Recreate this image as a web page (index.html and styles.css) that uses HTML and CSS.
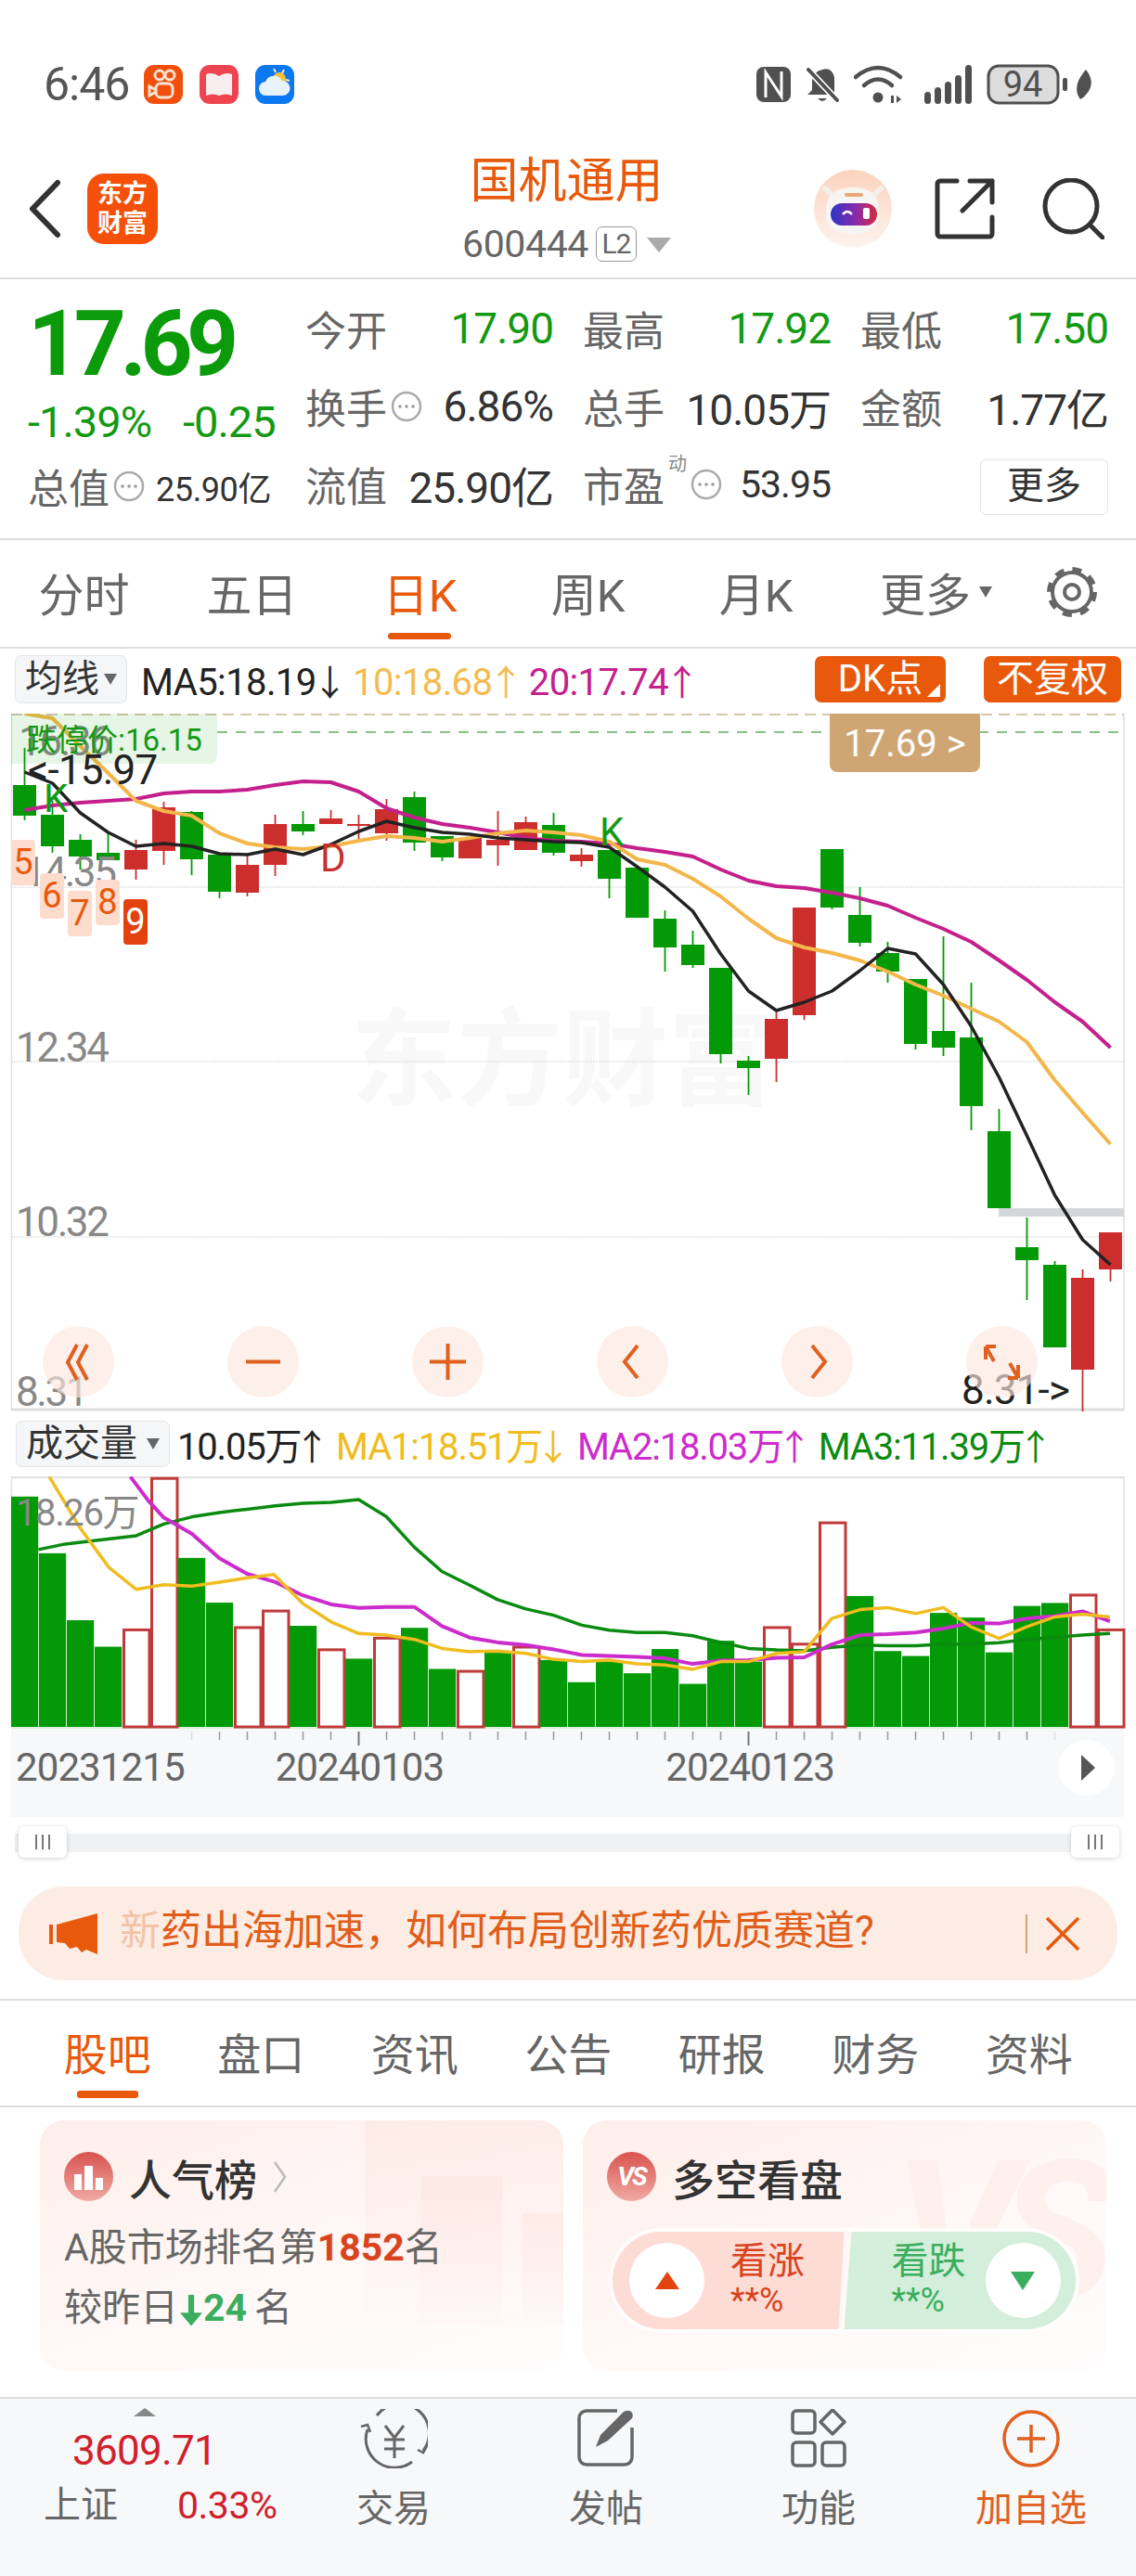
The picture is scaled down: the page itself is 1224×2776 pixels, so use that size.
FILE: index.html
```html
<!DOCTYPE html>
<html lang="zh-CN">
<head>
  <meta charset="UTF-8">
  <meta name="viewport" content="width=device-width, initial-scale=1.0">
  <title>国机通用 600444</title>
  <link rel="stylesheet" href="styles.css">
</head>
<body>

  <!-- Shared small "..." hint icon -->
  <svg class="sprite" width="0" height="0">
    <symbol id="hint" viewBox="0 0 34 34">
      <circle cx="17" cy="17" r="15" fill="none" stroke="#aaa" stroke-width="2.5"/>
      <circle cx="10" cy="17" r="1.8" fill="#999"/>
      <circle cx="17" cy="17" r="1.8" fill="#999"/>
      <circle cx="24" cy="17" r="1.8" fill="#999"/>
    </symbol>
  </svg>

  <!-- Status bar -->
  <div class="status">
    <span class="time">6:46</span>
    <svg class="app" viewBox="0 0 42 42">
      <rect width="42" height="42" rx="11" fill="#f0500c"/>
      <g fill="none" stroke="#fde3d3" stroke-width="3">
        <circle cx="17" cy="11" r="5"/>
        <circle cx="28" cy="11" r="5"/>
        <rect x="13" y="20" width="18" height="15" rx="5"/>
        <path d="M13 27 L6 23 V33 L13 29"/>
      </g>
    </svg>
    <svg class="app" viewBox="0 0 42 42">
      <rect width="42" height="42" rx="11" fill="#ee4450"/>
      <path d="M7 10 Q14 7 21 12 Q28 7 35 10 V33 Q28 30 21 33 Q14 30 7 33 Z" fill="#f6eeee"/>
    </svg>
    <svg class="app" viewBox="0 0 42 42">
      <rect width="42" height="42" rx="11" fill="#0a78f0"/>
      <circle cx="26" cy="15" r="7" fill="#f5c038"/>
      <path d="M20 4 L22 8 M31 5 L29 9 M37 17 L33 16" stroke="#fde9b0" stroke-width="2"/>
      <path d="M12 33 a7.5 7.5 0 0 1 -1 -15 a10 10 0 0 1 18 -1 a8 8 0 0 1 1 16 Z" fill="#e8f2fb"/>
    </svg>
    <div class="status-right">
      <svg width="37" height="38" viewBox="0 0 37 38">
        <rect width="37" height="38" rx="8" fill="#505050"/>
        <path d="M10 33 V6 L27 32 V5" fill="none" stroke="#fff" stroke-width="3"/>
      </svg>
      <svg width="36" height="40" viewBox="0 0 36 40">
        <path d="M2 31 L7 26 V16 Q8 6 18 4 Q28 1 31 12 V31 Z" fill="#505050"/>
        <path d="M13 35 H23 Q18 41 13 35 Z" fill="#505050"/>
        <path d="M3 4 L34 37" stroke="#fff" stroke-width="7"/>
        <path d="M3 4 L34 37" stroke="#505050" stroke-width="4" stroke-linecap="round"/>
      </svg>
      <svg class="wifi" width="53" height="42" viewBox="0 0 53 42">
        <g fill="none" stroke="#505050" stroke-width="4.5" stroke-linecap="round">
          <path d="M2 13 Q26 -7 50 13"/>
          <path d="M11 22 Q26 9 41 22"/>
        </g>
        <circle cx="26" cy="35" r="5.5" fill="#505050"/>
        <path d="M40 33 V41 H43 V33 Z M46 33 V41 L51 37 Z" fill="#505050"/>
      </svg>
      <svg width="51" height="42" viewBox="0 0 51 42">
        <g fill="#505050">
          <rect x="0" y="29" width="7" height="13" rx="3.5"/>
          <rect x="11" y="24" width="7" height="18" rx="3.5"/>
          <rect x="22" y="18" width="7" height="24" rx="3.5"/>
          <rect x="33" y="11" width="7" height="31" rx="3.5"/>
          <rect x="44" y="0" width="7" height="42" rx="3.5"/>
        </g>
      </svg>
      <svg class="batt" width="116" height="44" viewBox="0 0 116 44">
        <rect x="2" y="2" width="75" height="40" rx="11" fill="#dcdcdc" stroke="#505050" stroke-width="3"/>
        <text x="39" y="35" text-anchor="middle" class="batt-num">94</text>
        <rect x="82" y="15" width="5" height="14" rx="2" fill="#505050"/>
        <path d="M107 6 Q118 20 108 32 Q105 36 101 38 Q91 24 107 6 Z" fill="#505050"/>
      </svg>
    </div>
  </div>

  <!-- Top bar -->
  <div class="topbar">
    <div class="top-left">
      <svg width="35" height="64" viewBox="0 0 35 64">
        <path d="M31 4 L4 32 L31 60" fill="none" stroke="#333" stroke-width="6" stroke-linecap="round" stroke-linejoin="round"/>
      </svg>
      <div class="logo">东方<br>财富</div>
    </div>
    <div class="top-mid">
      <div class="stock-name">国机通用</div>
      <div class="stock-code">
        <span>600444</span>
        <span class="l2">L2</span>
        <span class="caret"></span>
      </div>
    </div>
    <div class="top-right">
      <svg width="84" height="84" viewBox="0 0 84 84">
        <defs>
          <linearGradient id="ava" x1="0" y1="0" x2="0" y2="1">
            <stop offset="0" stop-color="#fbd3bd"/>
            <stop offset="1" stop-color="#fdf3ee"/>
          </linearGradient>
          <linearGradient id="visor" x1="0" y1="0" x2="1" y2="0">
            <stop offset="0" stop-color="#2c34c8"/>
            <stop offset="0.55" stop-color="#8a2aa8"/>
            <stop offset="1" stop-color="#d82a3c"/>
          </linearGradient>
        </defs>
        <circle cx="42" cy="42" r="42" fill="url(#ava)"/>
        <path d="M12 20 L21 29 M72 20 L63 29" stroke="#f4eeea" stroke-width="6" stroke-linecap="round"/>
        <path d="M13 44 Q13 19 42 19 Q70 19 70 44 V52 Q66 68 42 69 Q16 68 13 52 Z" fill="#f7f5f4"/>
        <rect x="33" y="25" width="20" height="4" rx="2" fill="#e8a877"/>
        <rect x="18" y="36" width="50" height="24" rx="12" fill="url(#visor)"/>
        <path d="M31 48 Q36 42 41 48" fill="none" stroke="#fff" stroke-width="2.5"/>
        <rect x="53" y="41" width="7" height="12" rx="2" fill="#fff"/>
      </svg>
      <svg class="t-share" width="65" height="66" viewBox="0 0 65 66">
        <path d="M24 3 H6 a3 3 0 0 0 -3 3 V60 a3 3 0 0 0 3 3 H59 a3 3 0 0 0 3 -3 V42 M38 3 H62 V26 M62 3 L30 35" fill="none" stroke="#333" stroke-width="5" stroke-linecap="round" stroke-linejoin="round"/>
      </svg>
      <svg class="t-search" width="67" height="66" viewBox="0 0 67 66">
        <circle cx="31" cy="30" r="28" fill="none" stroke="#333" stroke-width="5"/>
        <path d="M52 51 L65 64" stroke="#333" stroke-width="5" stroke-linecap="round"/>
      </svg>
    </div>
  </div>

  <!-- Quote summary -->
  <div class="quote">
    <div class="quote-left">
      <div class="price">17.69</div>
      <div class="change"><span>-1.39%</span><span>-0.25</span></div>
      <div class="cap">
        <span class="lab">总值</span>
        <svg class="hint"><use href="#hint"/></svg>
        <span class="cap-val">25.90亿</span>
      </div>
    </div>
    <div class="quote-grid">
      <div class="cell"><span class="lab">今开</span><span class="num down">17.90</span></div>
      <div class="cell"><span class="lab">最高</span><span class="num down">17.92</span></div>
      <div class="cell"><span class="lab">最低</span><span class="num down">17.50</span></div>
      <div class="cell">
        <span class="lab-wrap"><span class="lab">换手</span><svg class="hint"><use href="#hint"/></svg></span>
        <span class="num">6.86%</span>
      </div>
      <div class="cell"><span class="lab">总手</span><span class="num">10.05万</span></div>
      <div class="cell"><span class="lab">金额</span><span class="num">1.77亿</span></div>
      <div class="cell"><span class="lab">流值</span><span class="num">25.90亿</span></div>
      <div class="cell">
        <span class="lab-wrap">
          <span class="lab">市盈</span><sup class="dyn">动</sup><svg class="hint"><use href="#hint"/></svg>
        </span>
        <span class="num pe">53.95</span>
      </div>
      <div class="cell cell-end"><a class="more-btn">更多</a></div>
    </div>
  </div>

  <!-- Period tabs -->
  <div class="periods">
    <a class="period">分时</a>
    <a class="period">五日</a>
    <a class="period on">日K</a>
    <a class="period">周K</a>
    <a class="period">月K</a>
    <a class="period period-more">更多<i class="mini-caret"></i></a>
    <a class="period">
      <svg width="56" height="58" viewBox="0 0 56 58">
        <g fill="none" stroke="#666">
          <circle cx="28" cy="29" r="21" stroke-width="4"/>
          <circle cx="28" cy="29" r="24" stroke-width="6" stroke-dasharray="9.8 9"/>
          <circle cx="28" cy="29" r="8" stroke-width="4"/>
        </g>
      </svg>
    </a>
  </div>

  <!-- MA legend -->
  <div class="ma-row">
    <div class="select">均线<i class="mini-caret"></i></div>
    <span class="ma">MA5:18.19<b>↓</b></span>
    <span class="ma ma-10">10:18.68<b>↑</b></span>
    <span class="ma ma-20">20:17.74<b>↑</b></span>
    <div class="ma-btns">
      <a class="tag-btn dk">DK点</a>
      <a class="tag-btn">不复权</a>
    </div>
  </div>

  <!-- Candlestick chart -->
  <div class="kchart">
    <div class="watermark">东方财富</div>
    <svg id="k-svg" class="plot" width="1224" height="752" viewBox="0 768 1224 752"></svg>
    <span class="axis a-top">16.36</span>
    <span class="axis a-1">14.35</span>
    <span class="axis a-2">12.34</span>
    <span class="axis a-3">10.32</span>
    <span class="axis a-4">8.31</span>
    <div class="limit">跌停价:16.15</div>
    <span class="note hi">&lt;-15.97</span>
    <span class="note lo">8.31-&gt;</span>
    <span class="mark k1">K</span>
    <span class="mark k2">K</span>
    <span class="mark d1">D</span>
    <span class="seq s5">5</span>
    <span class="seq s6">6</span>
    <span class="seq s7">7</span>
    <span class="seq s8">8</span>
    <span class="seq s9">9</span>
    <div class="last-tag">17.69 &gt;</div>

    <div class="tools">
      <a class="tool"><svg viewBox="0 0 77 77"><path d="M37 20 L27 39 L37 58 M48 20 L38 39 L48 58" /></svg></a>
      <a class="tool"><svg viewBox="0 0 77 77"><path d="M20 38.5 H57"/></svg></a>
      <a class="tool"><svg viewBox="0 0 77 77"><path d="M19 38.5 H58 M38.5 19 V58"/></svg></a>
      <a class="tool"><svg viewBox="0 0 77 77"><path d="M44 21 L30 38.5 L44 56"/></svg></a>
      <a class="tool"><svg viewBox="0 0 77 77"><path d="M33 21 L47 38.5 L33 56"/></svg></a>
      <a class="tool"><svg viewBox="0 0 77 77"><path d="M21 22 H32 M21 22 V36 M21 22 L30 38 M56 56 H45 M56 56 V42 M56 56 L47 40"/></svg></a>
    </div>
  </div>

  <!-- Volume legend -->
  <div class="vol-row">
    <div class="select select-vol">成交量<i class="mini-caret"></i></div>
    <span class="ma">10.05万<b>↑</b></span>
    <span class="ma vol-1">MA1:18.51万<b>↓</b></span>
    <span class="ma vol-2">MA2:18.03万<b>↑</b></span>
    <span class="ma vol-3">MA3:11.39万<b>↑</b></span>
  </div>

  <!-- Volume chart -->
  <div class="vchart">
    <svg id="v-svg" class="plot" width="1224" height="272" viewBox="0 1590 1224 272"></svg>
    <span class="axis a-vol">18.26万</span>
  </div>

  <!-- Date axis -->
  <div class="date-axis">
    <svg id="ticks" class="ticks" width="1224" height="18"></svg>
    <div class="dates">
      <span>20231215</span>
      <span>20240103</span>
      <span>20240123</span>
    </div>
    <a class="next"><i></i></a>
  </div>

  <!-- Range slider -->
  <div class="slider">
    <div class="track">
      <span class="grip grip-l"><i></i><i></i><i></i></span>
      <span class="grip grip-r"><i></i><i></i><i></i></span>
    </div>
  </div>

  <!-- Notice banner -->
  <div class="banner">
    <svg width="52" height="44" viewBox="0 0 52 44">
      <path d="M0 12 H4 V33 H0 Z M8 12 L52 0 V44 L40 39 L35 42 L30 36 L22 38 L17 32 L8 31 Z" fill="#e8590c"/>
    </svg>
    <span class="banner-text"><span class="fade">新</span>药出海加速，如何布局创新药优质赛道?</span>
    <i class="banner-sep"></i>
    <svg width="38" height="38" viewBox="0 0 38 38">
      <path d="M2 2 L36 36 M36 2 L2 36" stroke="#e8590c" stroke-width="3.5"/>
    </svg>
  </div>

  <!-- Content tabs -->
  <div class="subtabs">
    <a class="subtab on">股吧</a>
    <a class="subtab">盘口</a>
    <a class="subtab">资讯</a>
    <a class="subtab">公告</a>
    <a class="subtab">研报</a>
    <a class="subtab">财务</a>
    <a class="subtab">资料</a>
  </div>

  <!-- Cards -->
  <div class="cards">
    <div class="card">
      <svg class="card-bg" width="564" height="270" viewBox="0 0 564 270">
        <defs>
          <linearGradient id="podium" x1="0" y1="0" x2="0" y2="1">
            <stop offset="0" stop-color="#fbdcd6" stop-opacity="0.35"/>
            <stop offset="1" stop-color="#fbdcd6" stop-opacity="0.05"/>
          </linearGradient>
        </defs>
        <g fill="url(#podium)">
          <rect x="350" y="0" width="214" height="220"/>
          <rect x="410" y="60" width="88" height="160"/>
          <rect x="520" y="100" width="44" height="120"/>
        </g>
      </svg>
      <div class="card-head">
        <svg class="round-ic" viewBox="0 0 53 53">
          <rect x="11" y="24" width="8" height="17" fill="#fff"/>
          <rect x="22" y="15" width="9" height="26" fill="#fff"/>
          <rect x="34" y="28" width="8" height="13" fill="#fff"/>
        </svg>
        <span class="card-title">人气榜</span>
        <svg width="16" height="38" viewBox="0 0 16 38">
          <path d="M2 3 L13 19 L2 35" fill="none" stroke="#bbb" stroke-width="2.5"/>
        </svg>
      </div>
      <div class="card-line">A股市场排名第<b class="hot">1852</b>名</div>
      <div class="card-line">较昨日<b class="cool arrow-down"></b><b class="cool rank-num">24</b>名</div>
    </div>
    <div class="card">
      <span class="card-vs">VS</span>
      <div class="card-head">
        <span class="round-ic round-vs">VS</span>
        <span class="card-title">多空看盘</span>
      </div>
      <div class="pill">
        <div class="side bull">
          <span class="dot"><i class="tri-up"></i></span>
          <div class="side-text"><span>看涨</span><small>**%</small></div>
        </div>
        <div class="side bear">
          <div class="side-text"><span>看跌</span><small>**%</small></div>
          <span class="dot"><i class="tri-down"></i></span>
        </div>
      </div>
    </div>
  </div>

  <!-- Bottom navigation -->
  <div class="bottom-nav">
    <div class="index">
      <i class="index-caret"></i>
      <div class="index-val">3609.71</div>
      <div class="index-row"><span>上证</span><span class="index-pct">0.33%</span></div>
    </div>
    <a class="nav-item">
      <svg width="73" height="64" viewBox="0 0 73 64">
        <g fill="none" stroke="#666" stroke-width="3">
          <path d="M18 7 A31 31 0 0 1 68 45"/>
          <path d="M56 57 A31 31 0 0 1 8 22"/>
          <path d="M62 44 L68 47 L72 40 M1 19 L8 17 L11 25" stroke-width="2.5"/>
          <path d="M27 18 L37 31 L47 18 M26 33 H48 M26 43 H48 M37 31 V53"/>
        </g>
      </svg>
      <span>交易</span>
    </a>
    <a class="nav-item">
      <svg width="62" height="64" viewBox="0 0 62 64">
        <path d="M43 2 H10 a8 8 0 0 0 -8 8 V52 a8 8 0 0 0 8 8 H51 a8 8 0 0 0 8 -8 V20" fill="none" stroke="#666" stroke-width="3.5"/>
        <path d="M20 41 L25 28 L50 3 Q56 0 59 4 Q61 8 58 11 L33 34 Z" fill="#666"/>
      </svg>
      <span>发帖</span>
    </a>
    <a class="nav-item">
      <svg width="60" height="64" viewBox="0 0 60 64">
        <g fill="none" stroke="#666" stroke-width="3.5">
          <rect x="2" y="2" width="24" height="24" rx="4"/>
          <path d="M45 1 L58 14 L45 27 L32 14 Z" stroke-linejoin="round"/>
          <rect x="2" y="36" width="24" height="25" rx="4"/>
          <rect x="34" y="36" width="24" height="25" rx="4"/>
        </g>
      </svg>
      <span>功能</span>
    </a>
    <a class="nav-item nav-add">
      <svg width="64" height="64" viewBox="0 0 64 64">
        <circle cx="32" cy="32" r="29" fill="none" stroke="#e0601f" stroke-width="3.5"/>
        <path d="M17 32 H47 M32 17 V47" stroke="#e0601f" stroke-width="3.5"/>
      </svg>
      <span>加自选</span>
    </a>
  </div>

  <script src="chart.js"></script>
</body>
</html>
```

FILE: styles.css
```css
* {
  margin: 0;
  padding: 0;
  box-sizing: border-box;
}

body {
  width: 1224px;
  height: 2776px;
  overflow: hidden;
  background: #fff;
  font-family: Roboto, "Noto Sans CJK SC", sans-serif;
  color: #333;
}

i {
  font-style: normal;
}

.sprite {
  position: absolute;
}

/* Status bar */
.status {
  height: 130px;
  padding: 52px 45px 0 47px;
  display: flex;
  align-items: center;
}

.time {
  font-size: 50px;
  letter-spacing: -1px;
  color: #555;
  width: 108px;
}

.app {
  width: 42px;
  height: 42px;
  margin-right: 18px;
}

.status-right {
  margin-left: auto;
  display: flex;
  align-items: center;
  gap: 16px;
}

.wifi {
  margin-right: 7px;
}

.batt-num {
  font-size: 38px;
  fill: #505050;
  font-family: Roboto, sans-serif;
}

/* Top bar */
.topbar {
  height: 171px;
  border-bottom: 2px solid #ddd;
  display: grid;
  grid-template-columns: 1fr auto 1fr;
  align-items: center;
  padding: 20px 34px 0 31px;
}

.top-left {
  display: flex;
  align-items: center;
  gap: 28px;
}

.logo {
  width: 76px;
  height: 76px;
  border-radius: 18px;
  background: #f4500a;
  color: #fff;
  font-size: 27px;
  font-weight: 700;
  line-height: 32px;
  text-align: center;
  padding-top: 6px;
}

.top-mid {
  display: flex;
  flex-direction: column;
  align-items: center;
  gap: 14px;
}

.stock-name {
  font-size: 52px;
  line-height: 62px;
  color: #e8590c;
}

.stock-code {
  display: flex;
  align-items: center;
  height: 44px;
  font-size: 41px;
  letter-spacing: -0.4px;
  color: #666;
}

.l2 {
  border: 1.5px solid #999;
  border-radius: 7px;
  font-size: 30px;
  line-height: 36px;
  width: 44px;
  text-align: center;
  margin: 0 11px 0 8px;
  letter-spacing: -1px;
}

.caret {
  border-left: 13px solid transparent;
  border-right: 13px solid transparent;
  border-top: 16px solid #aaa;
  margin-top: 2px;
}

.top-right {
  display: flex;
  justify-content: flex-end;
  align-items: center;
}

.t-share {
  margin-left: 46px;
}

.t-search {
  margin-left: 51px;
}

/* Quote */
.quote {
  height: 281px;
  border-bottom: 2px solid #ddd;
  display: flex;
  padding-left: 30px;
}

.quote-left {
  width: 299px;
  padding-top: 20px;
}

.price {
  font-size: 98px;
  line-height: 100px;
  font-weight: 700;
  letter-spacing: -6.5px;
  color: #0a9a0a;
}

.change {
  height: 50px;
  margin-top: 9px;
  display: flex;
  gap: 34px;
  font-size: 47px;
  line-height: 50px;
  letter-spacing: -1px;
  color: #129a12;
  white-space: nowrap;
}

.cap {
  height: 84px;
  margin-top: 2px;
  display: flex;
  align-items: center;
}

.lab {
  font-size: 44px;
  color: #666;
}

.hint {
  width: 34px;
  height: 34px;
  margin-left: 4px;
}

.cap-val {
  font-size: 36px;
  letter-spacing: -0.4px;
  margin-left: 12px;
}

.quote-grid {
  padding-top: 11px;
  display: grid;
  grid-template-columns: repeat(3, 267px);
  grid-auto-rows: 84px;
  column-gap: 32px;
}

.cell {
  display: flex;
  align-items: center;
  justify-content: space-between;
}

.cell-end {
  justify-content: flex-end;
}

.lab-wrap {
  display: flex;
  align-items: center;
  position: relative;
}

.dyn {
  font-size: 20px;
  color: #888;
  line-height: 20px;
  margin: -44px 0 0 4px;
}

.num {
  font-size: 46px;
  letter-spacing: -1px;
}

.num.down {
  color: #129a12;
}

.num.pe {
  font-size: 41px;
}

.more-btn {
  width: 138px;
  height: 60px;
  border: 1.5px solid #e5e5e5;
  border-radius: 6px;
  font-size: 40px;
  line-height: 56px;
  text-align: center;
  color: #333;
  margin: 6px 0 0;
}

/* Period tabs */
.periods {
  height: 117px;
  border-bottom: 2px solid #ddd;
  display: grid;
  grid-template-columns: repeat(6, 181px) 138px;
  align-items: center;
}

.period {
  height: 100%;
  font-size: 49px;
  color: #666;
  display: flex;
  align-items: center;
  justify-content: center;
  padding-bottom: 4px;
  position: relative;
}

.period-more {
  padding-left: 26px;
}

.period.on {
  color: #e8590c;
}

.period.on::after {
  content: "";
  position: absolute;
  left: 50%;
  top: 100px;
  width: 68px;
  height: 7px;
  margin-left: -35px;
  border-radius: 4px;
  background: #e8590c;
}

.mini-caret {
  display: inline-block;
  margin-left: 9px;
  border-left: 7px solid transparent;
  border-right: 7px solid transparent;
  border-top: 12px solid #666;
}

/* Legend rows */
.ma-row {
  height: 70px;
  padding: 0 16px 4px;
  display: flex;
  align-items: center;
}

.select {
  width: 121px;
  height: 52px;
  margin-right: 15px;
  background: #f5f6f8;
  border: 1.5px solid #e4e5e8;
  border-radius: 7px;
  font-size: 40px;
  line-height: 48px;
  padding-left: 10px;
  display: flex;
  align-items: center;
  color: #333;
}

.select .mini-caret {
  margin-left: 5px;
}

.ma {
  font-size: 40px;
  letter-spacing: -0.6px;
  color: #222;
  margin-right: 10px;
  white-space: nowrap;
}

/* Tall thin arrows after each value */
.ma b {
  font-weight: 400;
  font-family: "Noto Sans CJK SC", sans-serif;
  font-size: 38px;
  margin: 0 -4px;
}

.ma-10 {
  color: #f3bb50;
}

.ma-20 {
  color: #c4208c;
}

.ma-btns {
  margin-left: auto;
  display: flex;
  gap: 41px;
}

.tag-btn {
  height: 50px;
  width: 148px;
  background: #e8590c;
  border-radius: 7px;
  color: #fff;
  font-size: 40px;
  line-height: 50px;
  text-align: center;
  position: relative;
}

.dk {
  width: 141px;
}

.dk::after {
  content: "";
  position: absolute;
  right: 6px;
  bottom: 6px;
  border-left: 14px solid transparent;
  border-bottom: 14px solid #fff;
}

/* Candlestick chart: overlays sit on a free canvas, coordinates are chart pixels */
.kchart {
  height: 752px;
  position: relative;
}

.plot {
  position: absolute;
  left: 0;
  top: 0;
}

.watermark {
  position: absolute;
  left: 378px;
  top: 309px;
  font-size: 114px;
  line-height: 130px;
  font-weight: 700;
  color: #f8f8f8;
  white-space: nowrap;
}

.axis {
  position: absolute;
  left: 17px;
  font-size: 44px;
  line-height: 40px;
  letter-spacing: -2.4px;
  color: #888;
}

.a-top {
  left: 20px;
  top: 10px;
}

.a-1 {
  left: 25px;
  top: 151px;
}

.a-2 {
  top: 340px;
}

.a-3 {
  top: 528px;
}

.a-4 {
  top: 711px;
}

.limit {
  position: absolute;
  left: 12px;
  top: 0;
  width: 222px;
  height: 54px;
  padding-left: 16px;
  border-radius: 0 0 8px 0;
  background: rgba(10, 154, 10, 0.1);
  color: #129a12;
  font-size: 33px;
  line-height: 58px;
  white-space: nowrap;
}

.note {
  position: absolute;
  font-size: 44px;
  line-height: 40px;
  letter-spacing: -0.8px;
  color: #222;
}

.hi {
  left: 30px;
  top: 41px;
}

.lo {
  left: 1036px;
  top: 709px;
}

.mark {
  position: absolute;
  font-size: 42px;
  line-height: 42px;
  color: #129a12;
}

.k1 {
  left: 47px;
  top: 71px;
}

.k2 {
  left: 646px;
  top: 107px;
}

.d1 {
  left: 345px;
  top: 135px;
  color: #c9302c;
}

.seq {
  position: absolute;
  width: 26px;
  height: 49px;
  border-radius: 4px;
  background: #fddccd;
  color: #e8590c;
  font-size: 38px;
  line-height: 49px;
  text-align: center;
}

.s5 {
  left: 12px;
  top: 136px;
}

.s6 {
  left: 43px;
  top: 172px;
}

.s7 {
  left: 73px;
  top: 191px;
}

.s8 {
  left: 103px;
  top: 179px;
}

.s9 {
  left: 133px;
  top: 200px;
  background: #e2420e;
  color: #fff;
}

.last-tag {
  position: absolute;
  left: 894px;
  top: 0;
  width: 162px;
  height: 63px;
  border-radius: 0 0 8px 8px;
  background: #cfa673;
  color: #fff;
  font-size: 40px;
  line-height: 66px;
  text-align: center;
}

.tools {
  position: absolute;
  left: 46px;
  top: 660px;
  display: flex;
  gap: 122px;
}

.tool {
  width: 77px;
  height: 77px;
  border-radius: 50%;
  background: rgba(252, 232, 222, 0.65);
}

.tool svg {
  display: block;
  fill: none;
  stroke: #e0601f;
  stroke-width: 4;
}

/* Volume */
.vol-row {
  height: 70px;
  padding: 0 0 0 17px;
  display: flex;
  align-items: center;
}

.select-vol {
  width: 166px;
  height: 50px;
  margin-right: 8px;
}

.select-vol .mini-caret {
  margin-left: 10px;
}

.vol-row .ma {
  letter-spacing: -1.2px;
  margin-right: 15px;
}

.vol-row .ma b {
  margin: 0 -7px;
}

.vol-1 {
  color: #f0bc20;
}

.vol-2 {
  color: #cc2ccc;
}

.vol-3 {
  color: #0b8a10;
}

.vchart {
  height: 272px;
  position: relative;
}

.a-vol {
  top: 20px;
  font-size: 40px;
  letter-spacing: -1.4px;
}

/* Date axis */
.date-axis {
  height: 95px;
  margin: 0 13px 0 12px;
  background: #f7f8fa;
  position: relative;
  overflow: hidden;
}

.ticks {
  display: block;
  margin-left: -12px;
}

.dates {
  display: flex;
  gap: 98px;
  padding-left: 5px;
  font-size: 42px;
  line-height: 48px;
  letter-spacing: -0.9px;
  color: #666;
}

.dates span:last-child {
  margin-left: 141px;
}

.next {
  position: absolute;
  right: 10px;
  top: 12px;
  width: 61px;
  height: 60px;
  border-radius: 50%;
  background: #fff;
  display: flex;
  align-items: center;
  justify-content: center;
}

.next i {
  border-top: 14px solid transparent;
  border-bottom: 14px solid transparent;
  border-left: 15px solid #555;
  margin-left: 4px;
}

/* Range slider */
.slider {
  height: 75px;
  padding: 18px 22px 0 16px;
}

.track {
  height: 20px;
  background: #f0f1f3;
  position: relative;
}

.grip {
  position: absolute;
  top: -8px;
  width: 52px;
  height: 34px;
  border-radius: 6px;
  background: #fff;
  box-shadow: 0 1px 5px rgba(0, 0, 0, 0.18);
  display: flex;
  align-items: center;
  justify-content: center;
  gap: 5px;
}

.grip i {
  width: 2px;
  height: 16px;
  background: #777;
}

.grip-l {
  left: 4px;
}

.grip-r {
  right: -4px;
}

/* Banner */
.banner {
  height: 101px;
  margin: 0 20px;
  border-radius: 48px;
  background: #fcece3;
  padding-left: 33px;
  display: flex;
  align-items: center;
}

.banner-text {
  margin: 0 0 5px 24px;
  width: 812px;
  font-size: 44px;
  line-height: 60px;
  color: #e05d1a;
  white-space: nowrap;
}

.fade {
  color: #f3c3a9;
}

.banner-sep {
  margin-left: 164px;
  width: 1.5px;
  height: 42px;
  background: #d9a07f;
}

.banner svg:last-child {
  margin-left: 19px;
}

/* Content tabs */
.subtabs {
  margin-top: 20px;
  height: 117px;
  border-top: 2px solid #ddd;
  border-bottom: 2px solid #ddd;
  display: grid;
  grid-template-columns: repeat(7, 165.5px);
  padding-left: 33px;
}

.subtab {
  font-size: 47px;
  color: #666;
  display: flex;
  align-items: center;
  justify-content: center;
  padding-bottom: 4px;
  position: relative;
}

.subtab.on {
  color: #e8590c;
}

.subtab.on::after {
  content: "";
  position: absolute;
  left: 50%;
  top: 97px;
  width: 66px;
  height: 8px;
  margin-left: -33px;
  border-radius: 3px;
  background: #e8590c;
}

/* Cards */
.cards {
  height: 312px;
  padding: 14px 0 0 43px;
  display: flex;
  gap: 21px;
}

.card {
  width: 564px;
  height: 270px;
  border-radius: 26px;
  background: linear-gradient(160deg, #fdeeea 0%, #fff8f6 55%, #fffdfd 100%);
  padding: 34px 0 0 26px;
  position: relative;
  overflow: hidden;
}

.card > * {
  position: relative;
}

.card > .card-bg {
  position: absolute;
  left: 0;
  top: 0;
}

.card-vs {
  position: absolute !important;
  left: 335px;
  top: 15px;
  font-size: 210px;
  line-height: 210px;
  font-weight: 700;
  font-style: italic;
  letter-spacing: -20px;
  color: #fdf0ed;
}

.card-head {
  height: 53px;
  display: flex;
  align-items: center;
  gap: 17px;
}

.round-ic {
  width: 53px;
  height: 53px;
  border-radius: 50%;
  background: linear-gradient(180deg, #d9534f, #f0aaa3);
  flex: none;
}

.round-vs {
  color: #fff;
  font-size: 28px;
  font-weight: 700;
  font-style: italic;
  line-height: 53px;
  text-align: center;
  letter-spacing: -2px;
}

.card-title {
  font-size: 46px;
  font-weight: 500;
  color: #333;
}

.card-line {
  height: 65px;
  font-size: 41px;
  line-height: 65px;
  color: #666;
  display: flex;
  align-items: center;
}

.card-head + .card-line {
  margin-top: 18px;
}

.hot {
  color: #d9431e;
  font-weight: 700;
}

.cool {
  color: #3aae5e;
  font-weight: 700;
}

.rank-num {
  margin-right: 8px;
}

.arrow-down {
  width: 24px;
  height: 34px;
  margin: 4px 1px 0 2px;
  background: #3aae5e;
  clip-path: polygon(37% 0, 63% 0, 63% 58%, 100% 58%, 50% 100%, 0 58%, 37% 58%);
}

.pill {
  margin: 33px 0 0 6px;
  width: 499px;
  height: 105px;
  border-radius: 53px;
  overflow: hidden;
  display: flex;
  box-shadow: 0 0 0 4px rgba(255, 255, 255, 0.7);
}

.side {
  width: 50%;
  height: 100%;
  display: flex;
  align-items: center;
}

.bull {
  background: #fddcd6;
  clip-path: polygon(0 0, 100% 0, calc(100% - 6px) 100%, 0 100%);
  padding-left: 18px;
  gap: 28px;
  color: #d9431e;
}

.bear {
  background: #d3eeda;
  clip-path: polygon(8px 0, 100% 0, 100% 100%, 0 100%);
  padding-left: 51px;
  color: #3aae5e;
}

.bear .dot {
  margin-left: 21px;
}

.dot {
  width: 81px;
  height: 81px;
  border-radius: 50%;
  background: #fff;
  display: flex;
  align-items: center;
  justify-content: center;
}

.tri-up {
  border-left: 13px solid transparent;
  border-right: 13px solid transparent;
  border-bottom: 19px solid #e2430f;
}

.tri-down {
  border-left: 13px solid transparent;
  border-right: 13px solid transparent;
  border-top: 20px solid #3aae5e;
}

.side-text {
  display: flex;
  flex-direction: column;
  width: 80px;
}

.side-text span {
  font-size: 40px;
  line-height: 42px;
}

.side-text small {
  font-size: 36px;
  line-height: 42px;
}

/* Bottom navigation */
.bottom-nav {
  height: 193px;
  border-top: 2px solid #ddd;
  background: #f7f8fa;
  display: grid;
  grid-template-columns: 309.5px repeat(4, 229px);
}

.index {
  padding: 10px 0 0 47px;
  display: flex;
  flex-direction: column;
  position: relative;
}

.index-caret {
  width: 0;
  margin-left: 97px;
  border-left: 12px solid transparent;
  border-right: 12px solid transparent;
  border-bottom: 9px solid #888;
}

.index-val {
  margin: 12px 0 0 31px;
  font-size: 44px;
  line-height: 50px;
  letter-spacing: -0.7px;
  color: #d0202c;
}

.index-row {
  margin-top: 8px;
  display: flex;
  gap: 64px;
  font-size: 40px;
  line-height: 52px;
  color: #666;
}

.index-pct {
  color: #d0202c;
  font-size: 41px;
  letter-spacing: -0.5px;
}

.nav-item {
  padding-top: 11px;
  display: flex;
  flex-direction: column;
  align-items: center;
  font-size: 40px;
  line-height: 56px;
  color: #666;
}

.nav-item span {
  margin-top: 16px;
}

.nav-add {
  color: #e0601f;
}
```

FILE: chart.js
```js
// Candles: [high, bodyTop, bodyBottom, low, colour]
const candles = [
  [805, 845, 878, 883, 'g'], [862, 877, 911, 918, 'g'], [898, 904, 922, 936, 'g'], [897, 918, 926, 926, 'g'],
  [904, 915, 936, 947, 'r'], [863, 869, 916, 931, 'r'], [873, 874, 925, 942, 'g'], [920, 920, 960, 967, 'g'],
  [920, 931, 961, 965, 'r'], [877, 887, 931, 943, 'r'], [873, 887, 895, 899, 'g'], [872, 881, 887, 887, 'r'],
  [877, 887, 889, 907, 'r'], [860, 871, 897, 905, 'r'], [852, 858, 907, 916, 'g'], [900, 900, 923, 927, 'g'],
  [902, 902, 924, 924, 'r'], [873, 904, 910, 932, 'r'], [879, 885, 915, 915, 'r'], [875, 888, 918, 921, 'g'],
  [913, 920, 927, 933, 'r'], [915, 915, 946, 967, 'g'], [934, 934, 988, 988, 'g'], [980, 989, 1020, 1046, 'g'],
  [1002, 1017, 1039, 1042, 'g'], [1042, 1042, 1135, 1145, 'g'], [1137, 1142, 1150, 1179, 'g'], [1088, 1097, 1140, 1165, 'r'],
  [977, 977, 1093, 1098, 'r'], [914, 914, 977, 979, 'g'], [955, 985, 1015, 1019, 'g'], [1014, 1026, 1046, 1058, 'g'],
  [1054, 1054, 1124, 1130, 'g'], [1008, 1110, 1128, 1137, 'g'], [1058, 1117, 1191, 1217, 'g'], [1194, 1218, 1301, 1301, 'g'],
  [1311, 1343, 1357, 1400, 'g'], [1358, 1362, 1451, 1451, 'g'], [1367, 1376, 1475, 1520, 'r'], [1327, 1327, 1367, 1380, 'r']
];

const ma5 = [831, 843, 875, 896, 911, 908, 911, 919, 920, 914, 920, 909, 895, 884, 891, 896, 898, 902, 904, 906, 907, 912, 933, 955, 981, 1027, 1067, 1088, 1079, 1067, 1045, 1021, 1027, 1060, 1105, 1160, 1223, 1287, 1335, 1362];
const ma10 = [768, 773, 803, 832, 862, 873, 878, 897, 908, 912, 914, 911, 905, 900, 902, 906, 902, 897, 894, 896, 899, 906, 925, 931, 946, 965, 989, 1010, 1020, 1026, 1034, 1046, 1060, 1072, 1086, 1100, 1122, 1163, 1198, 1232];
const ma20 = [872, 867, 864, 862, 860, 854, 852, 852, 850, 845, 841, 842, 852, 870, 880, 887, 891, 896, 902, 905, 906, 908, 913, 917, 922, 936, 948, 954, 956, 961, 967, 975, 988, 1000, 1014, 1034, 1055, 1079, 1100, 1128];

// Volume bars: top of the bar as measured on the reference (y = 1520 + v / 2.8)
const volumes = [
  [257, 'g'], [428, 'g'], [630, 'g'], [710, 'g'], [655, 'r'], [198, 'r'], [442, 'g'], [577, 'g'], [648, 'r'], [598, 'r'],
  [647, 'g'], [715, 'r'], [746, 'g'], [680, 'r'], [653, 'g'], [777, 'g'], [780, 'r'], [727, 'g'], [707, 'r'], [750, 'g'],
  [817, 'g'], [755, 'g'], [790, 'g'], [717, 'g'], [822, 'g'], [692, 'g'], [755, 'g'], [648, 'r'], [698, 'r'], [332, 'r'],
  [557, 'g'], [723, 'g'], [738, 'g'], [608, 'g'], [622, 'g'], [727, 'g'], [587, 'g'], [578, 'g'], [550, 'r'], [655, 'r']
];

// Volume lines as [x, y] pairs in the same measured units
const volMa1 = [[68, 197], [110, 350], [150, 470], [188, 537], [226, 523], [265, 527], [303, 515], [340, 503], [378, 492], [418, 580], [457, 635], [495, 670], [533, 675], [572, 688], [610, 715], [649, 725], [687, 723], [726, 730], [764, 748], [803, 755], [841, 750], [879, 762], [918, 765], [956, 778], [995, 755], [1033, 755], [1072, 730], [1110, 725], [1148, 625], [1187, 598], [1225, 592], [1264, 610], [1302, 592], [1340, 650], [1379, 685], [1417, 650], [1456, 620], [1494, 612], [1532, 620]];
const volMa2 = [[180, 197], [205, 270], [226, 320], [265, 370], [303, 443], [341, 490], [380, 515], [418, 555], [457, 582], [495, 593], [533, 590], [572, 590], [610, 648], [649, 683], [687, 697], [726, 705], [764, 718], [803, 735], [841, 738], [879, 741], [918, 745], [956, 762], [995, 752], [1033, 750], [1072, 743], [1110, 742], [1148, 703], [1187, 675], [1225, 672], [1264, 667], [1302, 655], [1340, 638], [1379, 640], [1417, 625], [1456, 617], [1494, 603], [1532, 633]];
const volMa3 = [[53, 417], [90, 400], [130, 390], [188, 375], [226, 340], [265, 318], [303, 305], [341, 295], [380, 285], [418, 277], [457, 274], [495, 266], [533, 317], [572, 410], [610, 483], [649, 525], [687, 568], [726, 596], [764, 615], [803, 645], [841, 660], [879, 667], [918, 667], [956, 677], [995, 697], [1033, 715], [1072, 720], [1110, 722], [1148, 712], [1187, 705], [1225, 707], [1264, 707], [1302, 702], [1340, 702], [1379, 698], [1417, 688], [1456, 682], [1494, 675], [1532, 670]];

const GREEN = '#049a07';
const RED = '#cc2e2e';

function candleX(i) {
  return 26.5 + i * 30;
}

function polyline(points, colour, width) {
  return `<polyline points="${points.join(' ')}" fill="none" stroke="${colour}" stroke-width="${width}" stroke-linejoin="round"/>`;
}

function drawCandles() {
  let out = '';

  // Frame and grid lines
  out += '<path d="M12.5 768 V1518 M1211 768 V1518" stroke="#ddd" stroke-width="1.5"/>';
  out += '<path d="M12 1518 H1211" stroke="#ddd" stroke-width="3"/>';
  out += '<path d="M12 769 H1211" stroke="#d5c6b0" stroke-width="2" stroke-dasharray="12 7"/>';
  out += '<path d="M234 788 H1211" stroke="#86c486" stroke-width="2" stroke-dasharray="11 9"/>';
  [955, 1143, 1332].forEach(y => {
    out += `<path d="M12 ${y} H1211" stroke="#e4e4e4" stroke-width="1.5" stroke-dasharray="2 1"/>`;
  });
  out += '<rect x="1076" y="1301" width="135" height="9" fill="#d4d7da"/>';

  candles.forEach((c, i) => {
    const x = candleX(i);
    const colour = c[4] === 'g' ? GREEN : RED;
    out += `<path d="M${x} ${c[0]} V${c[3]}" stroke="${colour}" stroke-width="1.8"/>`;
    out += `<rect x="${x - 12.5}" y="${c[1]}" width="25" height="${Math.max(c[2] - c[1], 2)}" fill="${colour}"/>`;
  });

  out += polyline(ma20.map((y, i) => `${candleX(i)},${y}`), '#c4208c', 4);
  out += polyline(ma10.map((y, i) => `${candleX(i)},${y}`), '#f3b64a', 4);
  out += polyline(ma5.map((y, i) => `${candleX(i)},${y}`), '#222', 3.5);

  document.getElementById('k-svg').innerHTML = out;
}

function volPoints(list) {
  return list.map(p => `${(p[0] / 1.281).toFixed(1)},${(1520 + p[1] / 2.8).toFixed(1)}`);
}

function drawVolume() {
  let out = '';
  out += '<path d="M12 1591 H1212" stroke="#e2e2e2" stroke-width="2.5"/>';
  out += '<path d="M12.5 1590 V1860 M1211 1590 V1860" stroke="#e2e2e2" stroke-width="1.5"/>';
  out += '<path d="M12 1861 H1212" stroke="#dcefdc" stroke-width="2.5"/>';

  volumes.forEach((v, i) => {
    const x = 12 + i * 30;
    const top = 1520 + v[0] / 2.8;
    if (v[1] === 'g') {
      out += `<rect x="${x}" y="${top}" width="29.2" height="${1860 - top}" fill="${GREEN}"/>`;
    } else {
      out += `<rect x="${x + 1.5}" y="${top + 1.5}" width="27.5" height="${1858.5 - top}" fill="#fff" stroke="#c03a3a" stroke-width="3"/>`;
    }
  });

  out += polyline(volPoints(volMa3), '#0b8a10', 3.5);
  out += polyline(volPoints(volMa2), '#cc2ccc', 4);
  out += polyline(volPoints(volMa1), '#f0bc20', 3.5);

  document.getElementById('v-svg').innerHTML = out;
}

function drawTicks() {
  let out = '';
  for (let k = 6; k <= 37; k++) {
    const x = candleX(k);
    const long = x === 386.5 || x === 806.5;
    const colour = k === 6 || k === 37 ? '#ddd' : (long ? '#777' : '#999');
    out += `<path d="M${x} 3 V${long ? 18 : 12}" stroke="${colour}" stroke-width="${long ? 2 : 1.5}"/>`;
  }
  document.getElementById('ticks').innerHTML = out;
}

drawCandles();
drawVolume();
drawTicks();
```
